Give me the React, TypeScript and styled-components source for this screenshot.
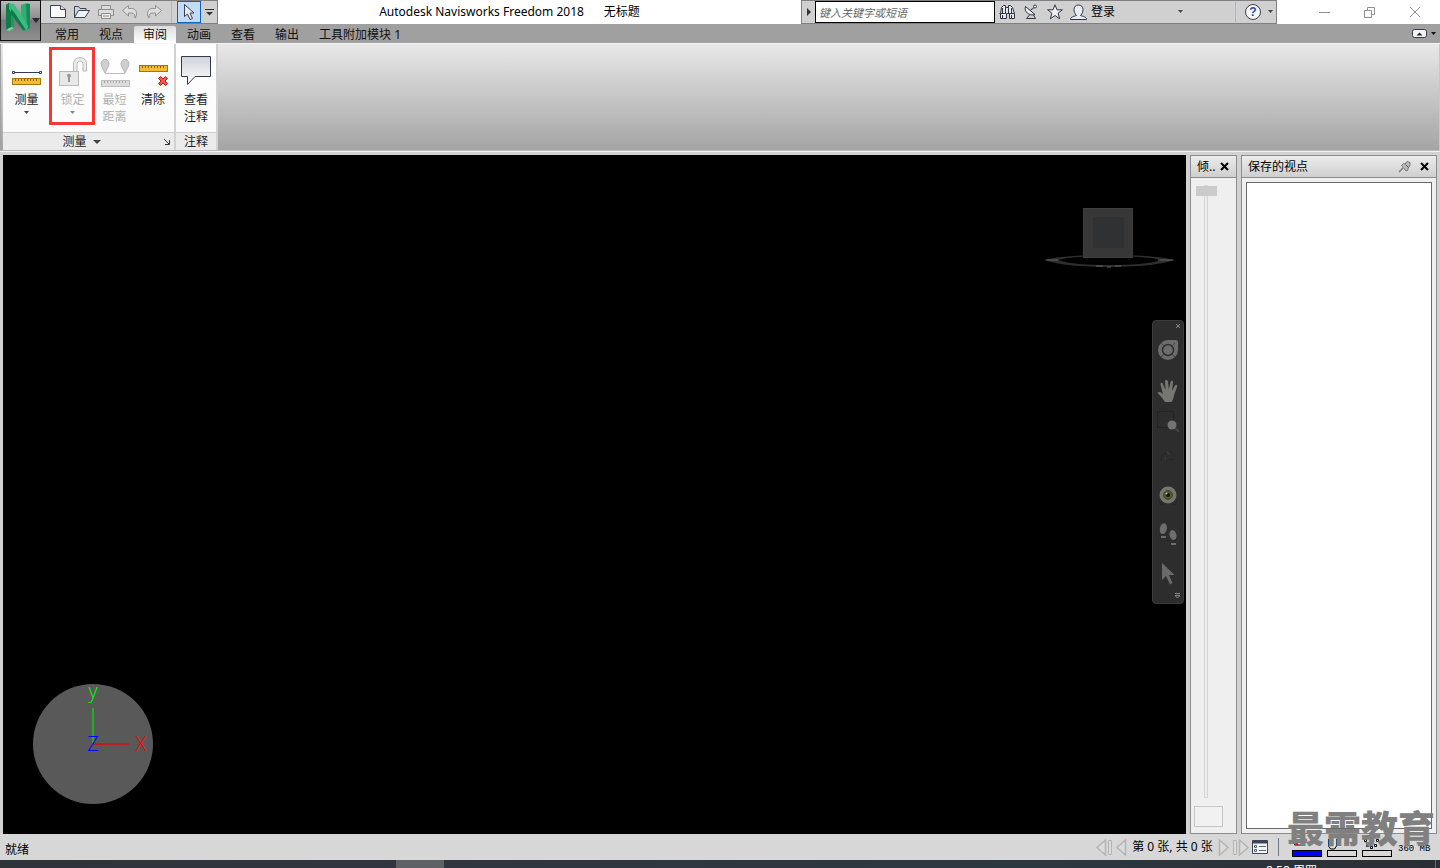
import React from "react";
import styled, { createGlobalStyle, css } from "styled-components";

const GlobalStyle = createGlobalStyle`
  * { box-sizing: border-box; }
  html, body, #root { height: 100%; }
  body {
    margin: 0;
    background: #d4d4d4;
    color: #000;
    font-family: "Noto Sans", "Noto Sans CJK SC", sans-serif;
    font-size: 12px;
    line-height: 16px;
    overflow: hidden;
  }
  button, input { font: inherit; color: inherit; }
  button { margin: 0; padding: 0; border: 0; background: none; cursor: default; }
  svg { display: block; flex: none; }
`;

/* ---------- shell ---------- */

const Shell = styled.div`
  position: relative;
  display: flex;
  flex-direction: column;
  height: 100vh;
  min-height: 480px;
`;

const Header = styled.header`
  position: relative;
  flex: none;
`;

const AppButton = styled.button`
  position: absolute;
  top: 0;
  left: 0;
  z-index: 2;
  display: flex;
  align-items: flex-start;
  width: 41px;
  height: 41px;
  padding: 2px 0 0 4px;
  border: 1px solid #111;
  background: linear-gradient(#b9b9b9, #8d8d8d 45%, #777 50%, #8f8f8f);
`;

const TitleBar = styled.div`
  display: flex;
  height: 24px;
  padding-left: 41px;
  background: #fff;
`;

const Strip = styled.div`
  display: flex;
  align-items: center;
  border: 1px solid #808080;
  background: #d0d0d0;
`;

const QuickAccess = styled(Strip)`
  width: 177px;
  padding-left: 5px;
  border-left: 0;
`;

const ToolButton = styled.button<{ $w?: number; $on?: boolean }>`
  display: flex;
  align-items: center;
  justify-content: center;
  width: ${(p) => p.$w ?? 24}px;
  height: 22px;
  ${(p) =>
    p.$on &&
    css`
      border: 1px solid #0a64c8;
      background: #c2dcf6;
    `}
`;

const Divider = styled.span<{ $h?: number; $c?: string; $after?: number }>`
  width: 1px;
  height: ${(p) => p.$h ?? 20}px;
  margin-right: ${(p) => p.$after ?? 0}px;
  background: ${(p) => p.$c ?? "#b4b4b4"};
`;

const Title = styled.h1`
  flex: 1;
  display: flex;
  justify-content: center;
  align-items: center;
  gap: 20px;
  margin: 0;
  font-size: 12px;
  font-weight: 400;
  white-space: nowrap;
`;

const InfoCenter = styled(Strip)`
  width: 476px;
`;

const SearchInput = styled.input`
  width: 180px;
  height: 22px;
  padding: 0 3px;
  border: 1px solid #000;
  border-radius: 0;
  background: #fff;
  font-size: 11px;
  outline: 0;
  &::placeholder { color: #666; font-style: italic; opacity: 1; }
`;

const LoginButton = styled.button`
  display: flex;
  align-items: center;
  gap: 4px;
  margin-left: 3px;
`;

const Spacer = styled.span<{ $w?: number }>`
  flex: ${(p) => (p.$w ? `0 0 ${p.$w}px` : "1")};
`;

const WindowButtons = styled.div`
  display: flex;
  align-items: center;
  margin-left: 24px;
  padding-right: 3px;
`;

const TabBar = styled.nav`
  display: flex;
  align-items: flex-end;
  height: 20px;
  padding: 0 4px 0 46px;
  gap: 2px;
  background: #a0a0a0;
  border-bottom: 1px solid #f4f4f4;
`;

const Tab = styled.button<{ $active?: boolean }>`
  height: 17px;
  padding: 0 9px;
  color: #111;
  line-height: 15px;
  white-space: nowrap;
  ${(p) =>
    p.$active &&
    css`
      background: linear-gradient(#dcdcdc, #fff);
      border-radius: 2px 2px 0 0;
    `}
`;

const TabTools = styled.div`
  display: flex;
  align-items: center;
  align-self: center;
  gap: 4px;
  margin-left: auto;
`;

/* ---------- ribbon ---------- */

const Ribbon = styled.div`
  display: flex;
  height: 107px;
  padding-left: 2px;
  border-left: 1px solid #a0a0a0;
  border-right: 1px solid #c8c8c8;
  border-bottom: 1px solid #bcbcbc;
  background: linear-gradient(#e8e8e8, #a4a4a4);
`;

const RibbonPanel = styled.section`
  display: flex;
  flex-direction: column;
  border-right: 2px solid #d2d2d2;
  background: linear-gradient(#fff, #fafafa);
`;

const PanelTools = styled.div`
  flex: 1;
  display: flex;
`;

const PanelFooter = styled.footer`
  display: flex;
  align-items: center;
  justify-content: center;
  height: 18px;
  border-top: 1px solid #cfcfcf;
  background: #ebebeb;
  color: #222;
`;

const FooterSide = styled.span<{ $basis?: number }>`
  flex: 1 0 ${(p) => p.$basis ?? 0}px;
  display: flex;
  justify-content: flex-end;
`;

const FooterTitle = styled.button`
  display: flex;
  align-items: center;
  gap: 6px;
`;

const RibbonButton = styled.button<{ $w: number }>`
  position: relative;
  display: flex;
  flex-direction: column;
  align-items: center;
  width: ${(p) => p.$w}px;
  padding-top: 11px;
  color: #222;
  line-height: 17px;
  &:disabled { color: #b0b0b0; }
`;

const RibbonLabel = styled.span`
  margin: 4px 0 3px;
  white-space: pre-line;
`;

const Highlight = styled.span`
  position: absolute;
  inset: 3px 0 7px -1px;
  border: 3px solid #fb3434;
`;

/* ---------- workspace ---------- */

const Workspace = styled.main`
  flex: 1;
  display: flex;
  gap: 4px;
  min-height: 0;
  padding: 3px 3px 0;
  border-top: 1px solid #f2f2f2;
  background: #d2d2d2;
`;

const Viewport = styled.div`
  position: relative;
  flex: 1;
  background: #000;
`;

const ViewCube = styled.div`
  position: absolute;
  top: 51px;
  right: 10px;
`;

const AxisTriad = styled.div`
  position: absolute;
  left: 29px;
  bottom: 21px;
`;

const NavBar = styled.div`
  position: absolute;
  top: 165px;
  right: 2px;
  display: flex;
  flex-direction: column;
  align-items: center;
  width: 32px;
  height: 284px;
  border: 1px solid #3c3c3c;
  border-radius: 4px;
  background: #2d2d2d;
`;

const NavCorner = styled.button`
  display: flex;
  align-self: flex-end;
  align-items: center;
  justify-content: center;
  width: 11px;
  height: 10px;
`;

const NavButton = styled.button<{ $h: number }>`
  display: flex;
  align-items: center;
  justify-content: center;
  width: 30px;
  height: ${(p) => p.$h}px;
`;

const DockPanel = styled.aside<{ $w: number }>`
  display: flex;
  flex-direction: column;
  width: ${(p) => p.$w}px;
  border: 1px solid #8c8c8c;
  background: #efefef;
`;

const DockHeader = styled.header`
  display: flex;
  align-items: center;
  height: 22px;
  padding: 0 7px 0 6px;
  gap: 9px;
  border-bottom: 1px solid #8c8c8c;
  background: linear-gradient(#ececec, #cfcfcf);
`;

const DockTitle = styled.h2`
  flex: 1;
  min-width: 0;
  margin: 0;
  font-size: 12px;
  font-weight: 400;
  white-space: nowrap;
`;

const SavedList = styled.div`
  flex: 1;
  margin: 4px;
  border: 1px solid #696969;
  background: #fff;
`;

const TiltBody = styled.div`
  flex: 1;
  display: flex;
  flex-direction: column;
  align-items: flex-start;
  min-height: 0;
  padding: 7px 3px 6px;
  gap: 8px;
`;

const TiltSlider = styled.input`
  flex: 1;
  min-height: 0;
  width: 21px;
  margin: 0 0 0 1px;
  writing-mode: vertical-lr;
  appearance: none;
  background: transparent;
  &::-webkit-slider-runnable-track {
    width: 4px;
    height: 100%;
    border: 1px solid #d2d6d6;
    background: #ececec;
  }
  &::-webkit-slider-thumb {
    appearance: none;
    width: 21px;
    height: 10px;
    margin-left: -9px;
    background: #cbcbcb;
  }
`;

const TiltValue = styled.input`
  width: 29px;
  height: 21px;
  padding: 0 2px;
  border: 1px solid #c6c6c6;
  background: #f1f1f1;
`;

/* ---------- status ---------- */

const StatusBar = styled.footer`
  flex: none;
  display: flex;
  align-items: center;
  height: 26px;
  padding: 0 10px 0 5px;
  background: #d7d7d7;
`;

const StatusText = styled.span`
  flex: 1;
  padding-top: 6px;
`;

const Pager = styled.div`
  display: flex;
  align-items: center;
  gap: 3px;
  margin-right: 10px;
`;

const PagerText = styled.span`
  width: 85px;
  text-align: center;
  white-space: nowrap;
`;

const Meters = styled.div`
  display: flex;
  gap: 5px;
  margin: 0 6px 0 13px;
`;

const Meter = styled.div`
  display: flex;
  flex-direction: column;
  align-items: center;
  justify-content: flex-end;
  width: 30px;
  height: 20px;
`;

const MeterBar = styled.div<{ $full?: boolean }>`
  width: 30px;
  height: 7px;
  border: 1px solid #000;
  background: ${(p) => (p.$full ? "#0000ff" : "#d7d7d7")};
`;

const Memory = styled.span`
  width: 32px;
  padding-top: 4px;
  font-family: "Liberation Mono", monospace;
  font-size: 9px;
  line-height: 8px;
  white-space: nowrap;
`;

const Taskbar = styled.div`
  flex: none;
  display: flex;
  justify-content: space-between;
  height: 8px;
  padding: 0 4px 0 396px;
  overflow: hidden;
  background: linear-gradient(90deg, #2f3439, #31353f 25%, #2c3840 70%, #2b2f35);
`;

const TaskItem = styled.span`
  width: 48px;
  background: #5e6267;
`;

const Clock = styled.time`
  width: 170px;
  height: 20px;
  padding-top: 3px;
  border-right: 1px solid #6a6e72;
  color: #fff;
`;

const Watermark = styled.div`
  position: absolute;
  right: 5px;
  bottom: 23px;
  z-index: 3;
  color: #808080;
  font-family: "Noto Sans CJK SC", sans-serif;
  font-size: 37px;
  font-weight: 900;
  line-height: 36px;
  pointer-events: none;
`;

/* ---------- drawings ---------- */

type IconProps = { w: number; h: number; children: React.ReactNode };
const Icon = ({ w, h, children }: IconProps) => (
  <svg width={w} height={h} viewBox={`0 0 ${w} ${h}`} fill="none" aria-hidden="true">
    {children}
  </svg>
);

const Caret = ({ w = 5, color = "#444" }: { w?: number; color?: string }) => (
  <Icon w={w} h={4}>
    <path d={`M0 0H${w}L${w / 2} ${Math.min(4, w / 2 + 0.5)}Z`} fill={color} />
  </Icon>
);

const Ruler = ({ x, y, off }: { x: number; y: number; off?: boolean }) => (
  <g transform={`translate(${x} ${y})`}>
    <rect x=".5" y=".5" width="28" height="6" fill={off ? "#dcdcdc" : "#f0bd35"} stroke={off ? "#bdbdbd" : "#a8720c"} />
    <path d="M3.5 1v2M6.5 1v2M9.5 1v2M12.5 1v2M15.5 1v2M18.5 1v2M21.5 1v2M24.5 1v2" stroke={off ? "#aaa" : "#8a5a08"} />
  </g>
);

const LogoIcon = () => (
  <Icon w={35} h={34}>
    <path d="M1 2l3-2 5 4v20l-4 2-4 1z" fill="#1d9a60" />
    <path d="M1 2l3-2 2 2v24l-5 1z" fill="#0d7c49" />
    <path d="M16 2l6-2 3 1v24l-5 3-4-3z" fill="#2bb173" />
    <path d="M21 1l4 0v24l-3 1.500z" fill="#17895a" />
    <path d="M4 0l5 1 14 22-1 4-4 .5L4 6z" fill="#3dbd80" />
    <path d="M6 6l3 3 12 18-3 .5L6 11z" fill="#0f7a49" />
    <path d="M1 27l5-3 3 1-5 3z" fill="#78d6a6" />
    <path d="M27 15h8l-4 5z" fill="#222a38" />
  </Icon>
);

const NewIcon = () => (
  <Icon w={18} h={16}>
    <path d="M1.500 1.500h10l5 4v8h-15z" fill="#fafafa" stroke="#3c4250" />
    <path d="M11.500 1.500v4h5" fill="#d5dae2" stroke="#3c4250" />
  </Icon>
);
const OpenIcon = () => (
  <Icon w={18} h={16}>
    <path d="M1.500 13.500v-11h4l1.500 2h6v2" fill="#cfd5de" stroke="#3c4656" />
    <path d="M1.500 13.500l4-7h11l-4.500 7z" fill="#eef1f5" stroke="#3c4656" />
  </Icon>
);
const PrintIcon = () => (
  <Icon w={18} h={16}>
    <path d="M4.500 5.500v-4h9v4M4.500 11.500h-3v-6h15v6h-3" stroke="#8b8b8b" fill="#dcdcdc" />
    <path d="M4.500 9.500h9v5h-9zM6 12h6" fill="#ececec" stroke="#8b8b8b" />
  </Icon>
);
const UndoIcon = ({ flip }: { flip?: boolean }) => (
  <Icon w={18} h={16}>
    <path
      transform={flip ? "matrix(-1 0 0 1 18 0)" : undefined}
      d="M1.500 6.500l6-5v3h3c3.500 0 5.500 2.500 5 6.500l-1.500 3c0-3.500-1-5-3.500-5h-3v3z"
      fill="#dedede"
      stroke="#8f8f8f"
    />
  </Icon>
);
const CursorIcon = () => (
  <Icon w={16} h={18}>
    <path d="M3.500 1.500v12l3-2.500 2.500 5.500 2.500-1-2.500-5.500h4z" fill="#e8edf4" stroke="#39404e" />
  </Icon>
);
const BinocularsIcon = () => (
  <Icon w={16} h={16}>
    <path d="M2.500 3.500l2-2h2v2h3v-2h2l2 2 2 6v5h-5v-5h-3v5h-6v-5z" fill="#e6e6e6" stroke="#2e3544" />
    <path d="M6.500 3.500v6M9.500 3.500v6M.5 9.500h6M9.500 9.500h6M3.500 4v5M12.500 4v5M3.500 11v3M12.500 11v3" stroke="#2e3544" />
  </Icon>
);
const DishIcon = () => (
  <Icon w={16} h={16}>
    <path d="M2.500 2.500c-2 5 4 10 9.500 8z" fill="#e9edf2" stroke="#2e3544" />
    <path d="M7 6.500l4-3M6.500 11l-3 3.500h9l-2-3.500" stroke="#2e3544" />
    <circle cx="12" cy="2.500" r="1.500" fill="#fff" stroke="#2e3544" />
  </Icon>
);
const StarIcon = () => (
  <Icon w={16} h={16}>
    <path d="M8 .8l2 5h5.400l-4.300 3.400 1.600 5.600L8 11.500l-4.700 3.300 1.600-5.600L.6 5.800H6z" fill="#eef1f5" stroke="#2e3544" />
  </Icon>
);
const UserIcon = () => (
  <Icon w={17} h={17}>
    <path d="M.5 15.500c0-2.500 3-3 6-4-2-2-2.500-4-2.500-6C4 3 5.500 1 8.500 1S13 3 13 5.500c0 2-.5 4-2.500 6 3 1 6 1.500 6 4z" fill="#e9edf2" stroke="#2e3544" />
  </Icon>
);
const HelpIcon = () => (
  <svg width="18" height="18" viewBox="0 0 18 18" aria-hidden="true">
    <circle cx="9" cy="9" r="7.500" fill="#f5f7fa" stroke="#3a4352" />
    <text x="9" y="13" textAnchor="middle" fontFamily="Liberation Sans, sans-serif" fontSize="12" fontWeight="700" fill="#1d50b4">?</text>
  </svg>
);

const MeasureIcon = () => (
  <Icon w={32} h={32}>
    <path d="M3 17.500h25" stroke="#333b4c" />
    <path d="M1.500 16.500h2v2h-2zM28.500 16.500h2v2h-2z" fill="#fff" stroke="#333b4c" />
    <Ruler x={1} y={23} />
  </Icon>
);
const LockIcon = () => (
  <Icon w={32} h={32}>
    <path d="M16.500 16V9c0-4 2.500-6.500 6.500-6.500S29.500 5 29.500 9v7h-3.500V9.500c0-2-1-3.500-3-3.500s-3 1.500-3 3.500V16" fill="#ececec" stroke="#b8b8b8" />
    <rect x="2.500" y="16.500" width="19" height="14" fill="#e8e8e8" stroke="#b8b8b8" />
    <path d="M10 21a2 2 0 1 1 3 1.500V27h-2v-4.500z" fill="#999" />
  </Icon>
);
const MinDistanceIcon = () => (
  <Icon w={32} h={32}>
    <path d="M6 18.500h20" stroke="#bcbcbc" />
    <path d="M6 18L2.500 11a4 4.500 0 1 1 7 0zM26 18l-3.500-7a4 4.500 0 1 1 7 0z" fill="#cfcfcf" stroke="#b8b8b8" />
    <Ruler x={2} y={25} off />
  </Icon>
);
const ClearIcon = () => (
  <Icon w={32} h={32}>
    <Ruler x={2} y={10} />
    <path d="M21.500 23.500l2-2 2.500 2.500 2.500-2.500 2 2L28 26l2.500 2.500-2 2L26 28l-2.500 2.500-2-2L24 26z" fill="#f25a4e" stroke="#c41414" />
  </Icon>
);
const CommentIcon = () => (
  <Icon w={32} h={32}>
    <defs>
      <linearGradient id="note" x1="0" y1="0" x2="0" y2="1">
        <stop offset="0" stopColor="#cfd2da" />
        <stop offset="1" stopColor="#fff" />
      </linearGradient>
    </defs>
    <path d="M1.500 1.500h29v20H15l-7.500 8v-8h-6z" fill="url(#note)" stroke="#333b4c" />
  </Icon>
);

const CloseMark = ({ color = "#000", s = 9, sw = 2 }: { color?: string; s?: number; sw?: number }) => (
  <Icon w={s} h={s}>
    <path d={`M1 1L${s - 1} ${s - 1}M${s - 1} 1L1 ${s - 1}`} stroke={color} strokeWidth={sw} />
  </Icon>
);

const PinIcon = () => (
  <Icon w={13} h={13}>
    <path d="M1 12l4-4" stroke="#777" strokeWidth="1.500" />
    <path d="M3.500 5.500l2-2 1.500.5 2-2.500 3 1v3L10 8v2l-2 1z" fill="#bbb" stroke="#777" />
    <path d="M7.500 4.500l3 3" stroke="#555" />
  </Icon>
);

const CubeDrawing = () => (
  <svg width="132" height="64" viewBox="0 0 132 64" aria-hidden="true">
    <path fillRule="evenodd" d="M0 54c15-4 40-5 65-5s50 1 66 5c-16 5-40 7-66 7s-50-2-65-7zM14 54c10 4 30 5 51 5s42-1 52-5c-12-3-30-4-52-4s-40 1-51 4z" fill="#2e2e2e" />
    <path d="M2 54h12M114 54h15M52 60h7M63 61h4M71 60h6" stroke="#606060" />
    <rect x="39" y="2" width="50" height="50" fill="#373737" />
    <rect x="49" y="11" width="31" height="31" fill="#2f3133" />
    <path d="M39.500 2.500h49v49h-49z" fill="none" stroke="#3e3e3e" />
  </svg>
);

const TriadDrawing = () => (
  <svg width="122" height="138" viewBox="0 -8 122 138" role="img" aria-label="XYZ">
    <circle cx="61" cy="61" r="60" fill="#595959" />
    <path d="M61 25v36" stroke="#20b020" strokeWidth="2" />
    <path d="M61 61h36" stroke="#b82020" strokeWidth="2" />
    <g fontFamily="Open Sans, sans-serif" fontWeight="300" fontSize="20" textAnchor="middle">
      <text x="61" y="15" fill="#00ff00">y</text>
      <text x="109" y="68" fill="#ff0000">X</text>
      <text x="61" y="68" fill="#0000ff">Z</text>
    </g>
  </svg>
);

const WheelIcon = () => (
  <Icon w={22} h={22}>
    <path d="M11 1h8q2 0 2 2v8A10 10 0 1 1 11 1z" fill="#6c6c6c" />
    <circle cx="11" cy="11" r="5.500" fill="#6c6c6c" stroke="#303030" strokeWidth="1.500" />
    <path d="M7 15l-3 3M15 15l3 3M7 7L4 4M15 7l3-3" stroke="#444" />
  </Icon>
);
const HandIcon = () => (
  <Icon w={22} h={24}>
    <path
      d="M8 23c-2-3-4-6-7.500-9 1-2 3.500-1 5.500 1L3.500 5.500c-.5-2 2-2.500 2.500-.5l2.500 6L8 2.500C8 .5 10.500.5 11 2.500l.8 8L13.500 3c.5-2 3-1.500 2.500.5l-1 8.500 3-5.500c1-1.500 3-.5 2 1.500l-3 8c-.5 4-1.500 5-2.500 7z"
      fill="#777772"
    />
  </Icon>
);
const ZoomIcon = () => (
  <Icon w={24} h={24}>
    <path d="M1.500 1.500h16v16h-16z" stroke="#232323" />
    <path d="M19 18l4 4" stroke="#444" strokeWidth="2" />
    <circle cx="16" cy="15" r="4.500" fill="#737373" />
  </Icon>
);
const OrbitIcon = () => (
  <Icon w={22} h={16}>
    <path d="M4 12a8 8 0 0 1 13-7M17 10l-5 1" stroke="#252525" />
    <path d="M10 3l3 2M8 9h1" stroke="#484848" />
  </Icon>
);
const EyeIcon = () => (
  <Icon w={24} h={24}>
    <circle cx="12" cy="10" r="8.500" fill="#77776f" />
    <circle cx="12" cy="10" r="4.500" fill="#525c2c" stroke="#3f4624" />
    <circle cx="12" cy="10" r="2" fill="#111" />
    <circle cx="10.500" cy="8.500" r="1" fill="#bbb" />
    <path d="M2 15l3 5 3-1M22 15l-3 5-3-1" stroke="#262626" />
  </Icon>
);
const FeetIcon = () => (
  <Icon w={20} h={24}>
    <ellipse cx="5.500" cy="6.500" rx="3.500" ry="5.500" fill="#6e6e6e" transform="rotate(12 5 6)" />
    <ellipse cx="15" cy="13" rx="3.500" ry="5" fill="#6e6e6e" transform="rotate(-14 15 13)" />
    <path d="M3 15h5M13 22h5" stroke="#6e6e6e" strokeWidth="2" />
  </Icon>
);
const PointerIcon = () => (
  <Icon w={16} h={24}>
    <path d="M2 1v17l4-4 4 8.500 2.500-1.500-3.500-8h5.500z" fill="#6c6966" />
  </Icon>
);

const PageIcon = ({ bar, flip }: { bar?: boolean; flip?: boolean }) => {
  const w = bar ? 17 : 11;
  return (
    <Icon w={w} h={17}>
      <g transform={flip ? `matrix(-1 0 0 1 ${w} 0)` : undefined} stroke="#b4b4b4" fill="#dcdcdc">
        <path d="M1 8.500L9.500 1v15z" strokeWidth="1.500" />
        {bar && <path d="M12.500 1.500h3v14h-3z" />}
      </g>
    </Icon>
  );
};
const SheetIcon = () => (
  <Icon w={16} h={16}>
    <path d="M.5 1.500h15v13H.5z" fill="#f3f5f8" stroke="#3a4556" />
    <path d="M1 3h14" stroke="#3a4556" strokeWidth="3" />
    <path d="M2.500 6.500h2v2h-2zM2.500 10.500h2v2h-2z" stroke="#5a6678" />
    <path d="M7 7.500h7M7 11.500h7" stroke="#5a6678" />
  </Icon>
);

/* ---------- data ---------- */

const TABS = ["常用", "视点", "审阅", "动画", "查看", "输出", "工具附加模块 1"];

const NAV_ITEMS: { name: string; h: number; icon: React.ReactNode }[] = [
  { name: "全导航控制盘", h: 38, icon: <WheelIcon /> },
  { name: "平移", h: 44, icon: <HandIcon /> },
  { name: "缩放窗口", h: 18, icon: <ZoomIcon /> },
  { name: "动态观察", h: 52, icon: <OrbitIcon /> },
  { name: "环视", h: 28, icon: <EyeIcon /> },
  { name: "漫游", h: 46, icon: <FeetIcon /> },
  { name: "选择", h: 34, icon: <PointerIcon /> },
];

export default function App() {
  return (
    <>
      <GlobalStyle />
      <Shell>
        <Header>
          <AppButton aria-label="应用程序菜单">
            <LogoIcon />
          </AppButton>
          <TitleBar>
            <QuickAccess>
              <ToolButton aria-label="新建"><NewIcon /></ToolButton>
              <ToolButton aria-label="打开"><OpenIcon /></ToolButton>
              <ToolButton aria-label="打印"><PrintIcon /></ToolButton>
              <ToolButton aria-label="撤消"><UndoIcon /></ToolButton>
              <ToolButton aria-label="恢复"><UndoIcon flip /></ToolButton>
              <Spacer />
              <Divider $h={22} />
              <Spacer />
              <ToolButton $on aria-label="选择"><CursorIcon /></ToolButton>
              <ToolButton $w={16} aria-label="自定义">
                <Icon w={9} h={8}>
                  <path d="M0 1.500h9" stroke="#333" />
                  <path d="M1 4h7L4.500 7.500z" fill="#333" />
                </Icon>
              </ToolButton>
            </QuickAccess>
            <Title>
              <span>Autodesk Navisworks Freedom 2018</span>
              <span>无标题</span>
            </Title>
            <InfoCenter>
              <ToolButton $w={13} aria-label="展开">
                <Icon w={4} h={8}><path d="M0 0l4 4-4 4z" fill="#333" /></Icon>
              </ToolButton>
              <SearchInput placeholder="键入关键字或短语" aria-label="搜索" />
              <ToolButton aria-label="搜索"><BinocularsIcon /></ToolButton>
              <ToolButton aria-label="通讯中心"><DishIcon /></ToolButton>
              <ToolButton aria-label="收藏夹"><StarIcon /></ToolButton>
              <LoginButton><UserIcon />登录</LoginButton>
              <Spacer />
              <ToolButton aria-label="登录选项"><Caret /></ToolButton>
              <Spacer $w={43} />
              <Divider $after={5} />
              <ToolButton aria-label="帮助"><HelpIcon /></ToolButton>
              <ToolButton $w={11} aria-label="帮助选项"><Caret /></ToolButton>
            </InfoCenter>
            <WindowButtons>
              <ToolButton $w={46} aria-label="最小化">
                <Icon w={11} h={11}><path d="M0 5.500h11" stroke="#909090" /></Icon>
              </ToolButton>
              <ToolButton $w={45} aria-label="还原">
                <Icon w={11} h={11}><path d="M.5 3.500h7v7h-7zM3.500 3.500v-3h7v7h-3" stroke="#909090" /></Icon>
              </ToolButton>
              <ToolButton $w={45} aria-label="关闭"><CloseMark color="#909090" s={12} sw={1} /></ToolButton>
            </WindowButtons>
          </TitleBar>
          <TabBar>
            {TABS.map((t) => (
              <Tab key={t} $active={t === "审阅"}>{t}</Tab>
            ))}
            <TabTools>
              <button aria-label="最小化功能区">
                <Icon w={15} h={9}>
                  <rect x=".5" y=".5" width="14" height="8" rx="2" fill="#f2f4f7" stroke="#333b4c" />
                  <path d="M4.500 6.500h6l-3-3z" fill="#222" />
                </Icon>
              </button>
              <button aria-label="功能区选项"><Caret color="#111" /></button>
            </TabTools>
          </TabBar>
        </Header>

        <Ribbon>
          <RibbonPanel>
            <PanelTools>
              <RibbonButton $w={47}>
                <MeasureIcon />
                <RibbonLabel>测量</RibbonLabel>
                <Caret />
              </RibbonButton>
              <RibbonButton $w={45} disabled>
                <LockIcon />
                <RibbonLabel>锁定</RibbonLabel>
                <Caret color="#888" />
                <Highlight />
              </RibbonButton>
              <RibbonButton $w={39} disabled>
                <MinDistanceIcon />
                <RibbonLabel>{"最短\n距离"}</RibbonLabel>
              </RibbonButton>
              <RibbonButton $w={38}>
                <ClearIcon />
                <RibbonLabel>清除</RibbonLabel>
              </RibbonButton>
              <Spacer $w={2} />
            </PanelTools>
            <PanelFooter>
              <FooterSide />
              <FooterTitle>测量<Caret w={8} /></FooterTitle>
              <FooterSide $basis={14}>
                <Icon w={10} h={6}><path d="M0 0l5 5M5.500 1v4.500H1" stroke="#333" /></Icon>
              </FooterSide>
            </PanelFooter>
          </RibbonPanel>
          <RibbonPanel>
            <PanelTools>
              <RibbonButton $w={40}>
                <CommentIcon />
                <RibbonLabel>{"查看\n注释"}</RibbonLabel>
              </RibbonButton>
            </PanelTools>
            <PanelFooter>注释</PanelFooter>
          </RibbonPanel>
        </Ribbon>

        <Workspace>
          <Viewport>
            <ViewCube><CubeDrawing /></ViewCube>
            <NavBar>
              <NavCorner aria-label="关闭导航栏"><CloseMark color="#888" s={6} sw={1} /></NavCorner>
              {NAV_ITEMS.map((n) => (
                <NavButton key={n.name} $h={n.h} aria-label={n.name}>{n.icon}</NavButton>
              ))}
              <NavCorner aria-label="导航栏选项">
                <Icon w={5} h={6}><path d="M0 .5h5M0 2.500h5L2.500 5z" stroke="#888" /></Icon>
              </NavCorner>
            </NavBar>
            <AxisTriad><TriadDrawing /></AxisTriad>
          </Viewport>

          <DockPanel $w={47}>
            <DockHeader>
              <DockTitle>倾..</DockTitle>
              <button aria-label="关闭倾斜"><CloseMark /></button>
            </DockHeader>
            <TiltBody>
              <TiltSlider type="range" min={0} max={100} defaultValue={0} aria-label="倾斜" />
              <TiltValue readOnly aria-label="倾斜角度" />
            </TiltBody>
          </DockPanel>

          <DockPanel $w={196}>
            <DockHeader>
              <DockTitle>保存的视点</DockTitle>
              <button aria-label="自动隐藏"><PinIcon /></button>
              <button aria-label="关闭保存的视点"><CloseMark /></button>
            </DockHeader>
            <SavedList />
          </DockPanel>
        </Workspace>

        <StatusBar>
          <StatusText>就绪</StatusText>
          <Pager>
            <button aria-label="第一张"><PageIcon bar /></button>
            <button aria-label="上一张"><PageIcon /></button>
            <PagerText>第 0 张, 共 0 张</PagerText>
            <button aria-label="下一张"><PageIcon flip /></button>
            <button aria-label="最后一张"><PageIcon bar flip /></button>
            <button aria-label="图纸浏览器"><SheetIcon /></button>
          </Pager>
          <Divider $h={18} $c="#6b7889" />
          <Meters>
            <Meter>
              <Icon w={28} h={13}>
                <path d="M1.500 3v5h8l3-4" fill="#fff" stroke="#000" />
                <path d="M2 3h3v5H2z" fill="#f00" />
              </Icon>
              <MeterBar $full />
            </Meter>
            <Meter>
              <Icon w={28} h={13}>
                <path d="M.5 2v7l2 3h4l2-3V2" fill="#ddd" stroke="#000" />
                <path d="M4.500 2v4" stroke="#000" />
              </Icon>
              <MeterBar />
            </Meter>
            <Meter>
              <Icon w={28} h={13}>
                <path d="M1.500 2.500h2v2h-2zM3.500 7.500h2v2h-2zM7.500 9.500h2v2h-2zM11.500 7.500h2v2h-2zM13.500 2.500h2v2h-2zM7.500 4.500h2v2h-2z" fill="#fff" stroke="#000" />
              </Icon>
              <MeterBar />
            </Meter>
          </Meters>
          <Memory>360 MB</Memory>
        </StatusBar>

        <Taskbar>
          <TaskItem />
          <Clock>8:58 周四</Clock>
        </Taskbar>
        <Watermark>最需教育</Watermark>
      </Shell>
    </>
  );
}
